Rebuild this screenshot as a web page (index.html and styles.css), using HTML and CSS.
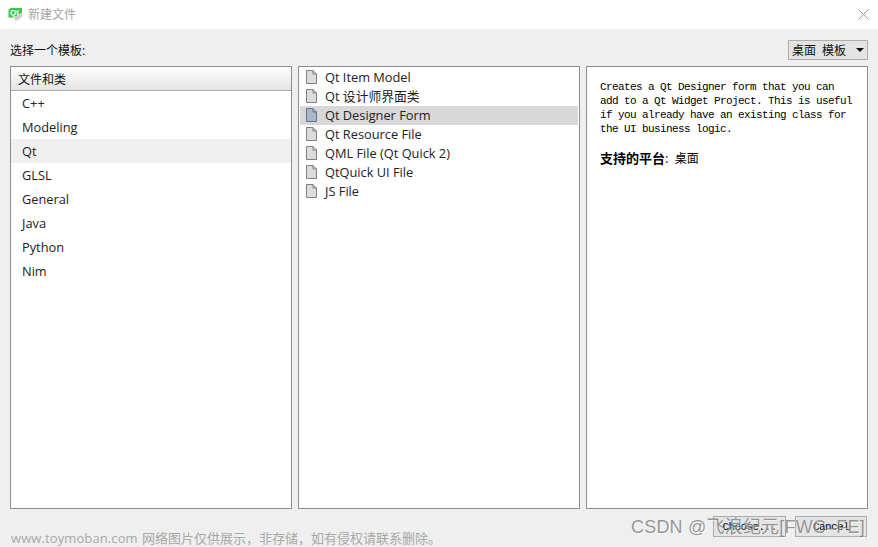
FILE: index.html
```html
<!DOCTYPE html>
<html lang="zh">
<head>
<meta charset="utf-8">
<title>新建文件</title>
<link rel="stylesheet" href="styles.css">
</head>
<body>
<div class="dialog">
  <header class="titlebar">
    <svg class="logo" width="15" height="14" viewBox="0 0 15 14">
      <path d="M2.500 1H14V7L11 10.500H.5V3Z" fill="#41c44a"/>
      <path d="M6.500 13.500C6.500 9.500 10 6.500 14.500 6C14.500 10 12 13.500 6.500 13.500Z" fill="#cfcfcf"/>
      <text x="2" y="8" class="logo-text">Qt</text>
    </svg>
    <span class="title">新建文件</span>
    <svg class="close" width="11" height="11" viewBox="0 0 11 11"><path d="M.5.500L10.500 10.500M10.500.500L.5 10.500" stroke="#9a9a9a" fill="none"/></svg>
  </header>
  <main class="content">
    <div class="toprow">
      <span class="prompt">选择一个模板:</span>
      <div class="combo"><span>桌面 模板</span><i class="arrow"></i></div>
    </div>
    <div class="panels">
      <section class="panel">
        <div class="panel-head">文件和类</div>
        <ul class="cats">
          <li>C++</li><li>Modeling</li><li class="current">Qt</li><li>GLSL</li><li>General</li><li>Java</li><li>Python</li><li>Nim</li>
        </ul>
      </section>
      <section class="panel">
        <ul class="files">
          <li><svg class="doc" viewBox="0 0 11 14"><path d="M.5.500H7L10.500 4V13.500H.5Z"/><path d="M7 .500V4H10.500" fill="none"/></svg>Qt Item Model</li>
          <li><svg class="doc" viewBox="0 0 11 14"><path d="M.5.500H7L10.500 4V13.500H.5Z"/><path d="M7 .500V4H10.500" fill="none"/></svg>Qt 设计师界面类</li>
          <li class="selected"><svg class="doc" viewBox="0 0 11 14"><path d="M.5.500H7L10.500 4V13.500H.5Z"/><path d="M7 .500V4H10.500" fill="none"/></svg>Qt Designer Form</li>
          <li><svg class="doc" viewBox="0 0 11 14"><path d="M.5.500H7L10.500 4V13.500H.5Z"/><path d="M7 .500V4H10.500" fill="none"/></svg>Qt Resource File</li>
          <li><svg class="doc" viewBox="0 0 11 14"><path d="M.5.500H7L10.500 4V13.500H.5Z"/><path d="M7 .500V4H10.500" fill="none"/></svg>QML File (Qt Quick 2)</li>
          <li><svg class="doc" viewBox="0 0 11 14"><path d="M.5.500H7L10.500 4V13.500H.5Z"/><path d="M7 .500V4H10.500" fill="none"/></svg>QtQuick UI File</li>
          <li><svg class="doc" viewBox="0 0 11 14"><path d="M.5.500H7L10.500 4V13.500H.5Z"/><path d="M7 .500V4H10.500" fill="none"/></svg>JS File</li>
        </ul>
      </section>
      <section class="panel desc">
        <p class="mono">Creates a Qt Designer form that you can<br>add to a Qt Widget Project. This is useful<br>if you already have an existing class for<br>the UI business logic.</p>
        <p class="platform"><b>支持的平台</b>:&nbsp;<span class="plat-val">桌面</span></p>
      </section>
    </div>
    <div class="buttons">
      <button class="btn choose">Choose...</button>
      <button class="btn cancel">Cancel</button>
    </div>
  </main>
  <div class="wm-left"><span class="wm-url">www.toymoban.com</span> 网络图片仅供展示，非存储，如有侵权请联系删除。</div>
  <div class="wm-right">CSDN @飞浪纪元[FWC–FE]</div>
</div>
</body>
</html>
```
FILE: styles.css
```css
* { box-sizing: border-box; }
html, body { margin: 0; padding: 0; }
body {
  width: 878px;
  height: 547px;
  overflow: hidden;
  font-family: "Open Sans", "Noto Sans CJK SC", sans-serif;
  font-size: 12.8px;
  color: #222;
}
.dialog {
  position: relative;
  width: 878px;
  height: 547px;
  display: flex;
  flex-direction: column;
  background: #efefef;
}
.titlebar {
  height: 29px;
  flex: none;
  background: #fff;
  display: flex;
  align-items: center;
  padding: 0 9px 1px 8px;
}
.logo { flex: none; }
.logo-text {
  font-family: "Liberation Sans", sans-serif;
  font-size: 8px;
  font-weight: 700;
  fill: #fff;
}
.title {
  margin-left: 5px;
  color: #a5a5a5;
  font-size: 12px;
  flex: 1;
}
.close { flex: none; }
.content {
  flex: 1;
  min-height: 0;
  display: flex;
  flex-direction: column;
  padding: 0 10px 10px;
}
.toprow {
  height: 37px;
  flex: none;
  display: flex;
  align-items: flex-end;
  justify-content: space-between;
  padding-bottom: 6px;
}
.prompt {
  font-size: 12px;
  color: #111;
  line-height: 16px;
  margin-bottom: 1px;
}
.combo {
  width: 80px;
  height: 20px;
  border: 1px solid #adadad;
  background: #e4e4e4;
  display: flex;
  align-items: center;
  padding-left: 3px;
  font-size: 12px;
  color: #111;
  white-space: pre;
  word-spacing: 3px;
}
.arrow {
  width: 0;
  height: 0;
  margin-left: 10px;
  border-left: 4px solid transparent;
  border-right: 4px solid transparent;
  border-top: 4px solid #111;
}
.panels {
  height: 443px;
  flex: none;
  display: flex;
  gap: 6px;
}
.panel {
  width: 282px;
  height: 443px;
  border: 1px solid #8a8d94;
  background: #fff;
}
.panel-head {
  height: 24px;
  padding: 1px 0 0 7px;
  font-size: 12px;
  line-height: 23px;
  color: #111;
  background: linear-gradient(#fdfdfd, #e4e4e4);
  border-bottom: 1px solid #a9a9ad;
}
.cats, .files {
  list-style: none;
  margin: 0;
  padding: 0;
}
.cats li {
  height: 24px;
  line-height: 24px;
  padding-left: 11px;
}
.cats .current { background: #efefef; }
.files { padding: 1px; }
.files li {
  height: 19px;
  display: flex;
  align-items: center;
  padding: 0 0 2px 6px;
  white-space: pre;
}
.files .selected { background: #d8d8d8; }
.doc {
  width: 11px;
  height: 14px;
  flex: none;
  margin-right: 8px;
  fill: #dcdcdc;
  stroke: #7f7f7f;
}
.selected .doc {
  fill: #a9b8c8;
  stroke: #5c7590;
}
.desc { padding: 13px 0 0 13px; }
.desc p { margin: 0; }
.mono {
  font-family: "Liberation Mono", monospace;
  font-size: 11px;
  letter-spacing: -0.6px;
  line-height: 14px;
  color: #000;
}
.platform {
  margin-top: 14px !important;
  font-size: 13px;
  line-height: 17px;
  color: #000;
}
.plat-val {
  font-size: 12px;
  margin-left: 3px;
}
.buttons {
  flex: 1;
  display: flex;
  justify-content: flex-end;
  align-items: flex-start;
  gap: 9px;
  padding: 7px 1px 0 0;
}
.btn {
  height: 21px;
  padding: 0;
  border: 1px solid #adadad;
  background: #e4e4e4;
  font-family: "Liberation Mono", monospace;
  font-size: 11px;
  letter-spacing: -0.6px;
  color: #000;
}
.choose { width: 73px; }
.cancel { width: 72px; }
.wm-left {
  position: absolute;
  left: 11px;
  top: 529px;
  font-size: 13px;
  line-height: 18px;
  color: #a8a8a8;
  white-space: nowrap;
  word-spacing: 1px;
}
.wm-url { letter-spacing: 0.1px; }
.wm-right {
  position: absolute;
  left: 631px;
  top: 513px;
  font-family: "Liberation Sans", "Noto Sans CJK SC", sans-serif;
  font-size: 18px;
  letter-spacing: 0.2px;
  line-height: 28px;
  color: rgba(120, 120, 120, 0.75);
  text-shadow: 1px 1px 0 rgba(255, 255, 255, 0.5);
  white-space: nowrap;
}
```
